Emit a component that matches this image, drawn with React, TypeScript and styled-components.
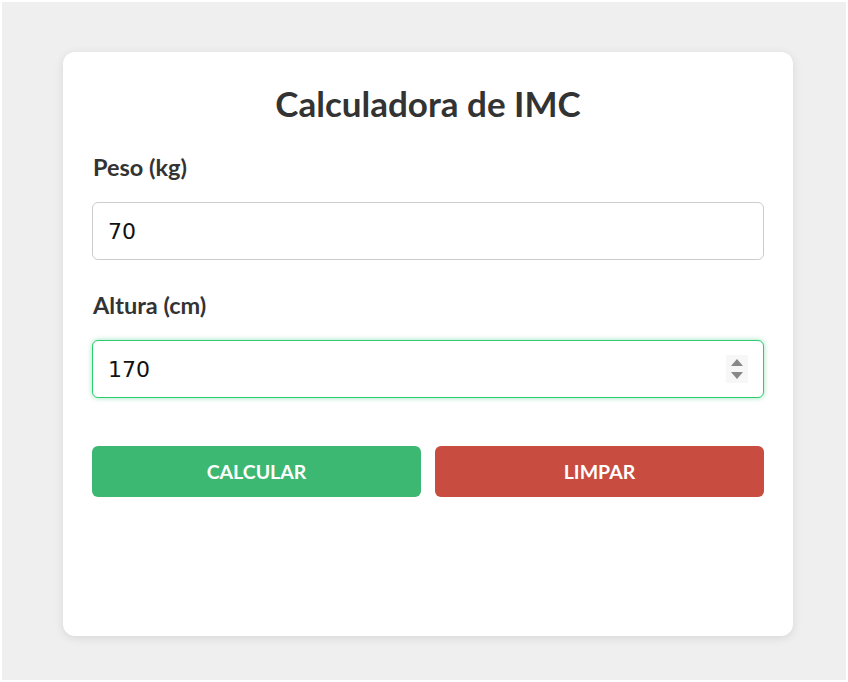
import React, { useState } from "react";
import styled, { createGlobalStyle } from "styled-components";

const Global = createGlobalStyle`
  html, body { margin: 0; padding: 0; background: #ffffff; }
  body { font-family: Lato, "Open Sans", sans-serif; }
  * { box-sizing: border-box; }
`;

const Page = styled.div`
  margin: 2px;
  height: 678px;
  background: #efefef;
  padding: 50px 0 0 61px;
`;

const Card = styled.div`
  width: 730px;
  height: 584px;
  background: #ffffff;
  border-radius: 12px;
  box-shadow: 0 2px 10px rgba(0, 0, 0, 0.1);
  padding: 0 29px;
  display: flex;
  flex-direction: column;
`;

const Title = styled.h1`
  margin: 30px 0 29px;
  font-family: Lato, sans-serif;
  font-weight: 700;
  font-size: 35px;
  line-height: 42px;
  color: #333333;
  text-align: center;
`;

const Field = styled.div`
  display: flex;
  flex-direction: column;
  margin-bottom: 31px;
`;

const Label = styled.label`
  font-family: Lato, sans-serif;
  font-weight: 700;
  font-size: 23.5px;
  line-height: 28px;
  color: #333333;
  margin-bottom: 21px;
  padding-left: 1px;
`;

const InputBox = styled.div<{ $focused?: boolean }>`
  display: flex;
  align-items: center;
  height: 58px;
  border: 1px solid ${(p) => (p.$focused ? "#2ecc71" : "#cccccc")};
  border-radius: 6px;
  box-shadow: ${(p) => (p.$focused ? "0 0 5px rgba(46, 204, 113, 0.5)" : "none")};
  padding: 0 15px;
  background: #ffffff;
`;

const Input = styled.input`
  flex: 1;
  min-width: 0;
  border: none;
  outline: none;
  background: transparent;
  padding: 0;
  font-family: "DejaVu Sans", sans-serif;
  font-size: 22px;
  color: #111111;
  -moz-appearance: textfield;
  &::-webkit-inner-spin-button,
  &::-webkit-outer-spin-button {
    -webkit-appearance: none;
    margin: 0;
  }
`;

const Spinner = styled.div`
  width: 22px;
  height: 28px;
  background: #f7f7f7;
  display: flex;
  flex-direction: column;
  align-items: center;
  justify-content: center;
  gap: 6px;
`;

const Buttons = styled.div`
  display: grid;
  grid-template-columns: 1fr 1fr;
  gap: 14px;
  margin-top: 17px;
`;

const Button = styled.button<{ $color: string }>`
  height: 51px;
  border: none;
  border-radius: 6px;
  background: ${(p) => p.$color};
  color: #ffffff;
  font-family: Lato, sans-serif;
  font-weight: 700;
  font-size: 19.5px;
  text-transform: uppercase;
  cursor: pointer;
`;

export default function App() {
  const [peso, setPeso] = useState("70");
  const [altura, setAltura] = useState("170");
  return (
    <>
      <Global />
      <Page>
        <Card>
          <Title>Calculadora de IMC</Title>
          <Field>
            <Label htmlFor="peso">Peso (kg)</Label>
            <InputBox>
              <Input id="peso" type="number" value={peso} onChange={(e) => setPeso(e.target.value)} />
            </InputBox>
          </Field>
          <Field>
            <Label htmlFor="altura">Altura (cm)</Label>
            <InputBox $focused>
              <Input id="altura" type="number" value={altura} onChange={(e) => setAltura(e.target.value)} />
              <Spinner>
                <svg width="12" height="7" viewBox="0 0 12 7">
                  <path d="M6 0 L12 7 L0 7 Z" fill="#888888" />
                </svg>
                <svg width="12" height="7" viewBox="0 0 12 7">
                  <path d="M0 0 L12 0 L6 7 Z" fill="#888888" />
                </svg>
              </Spinner>
            </InputBox>
          </Field>
          <Buttons>
            <Button $color="#3cb872">Calcular</Button>
            <Button $color="#c84c3f">Limpar</Button>
          </Buttons>
        </Card>
      </Page>
    </>
  );
}
